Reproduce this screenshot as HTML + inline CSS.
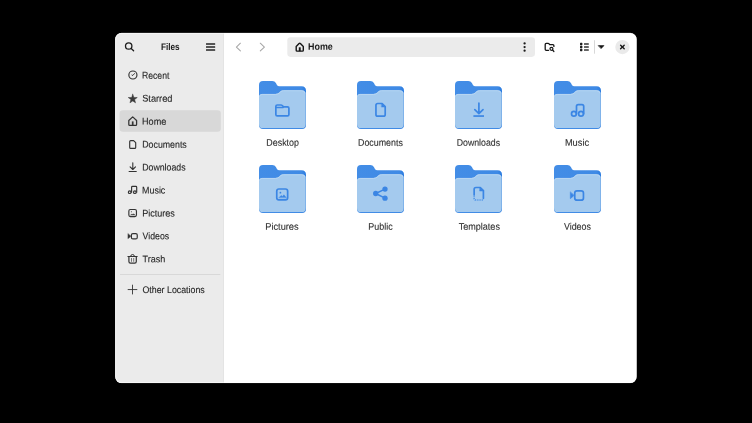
<!DOCTYPE html>
<html><head><meta charset="utf-8">
<style>
html,body{margin:0;padding:0;background:#000;}
body{width:752px;height:423px;position:relative;overflow:hidden;font-family:"Liberation Sans",sans-serif;}
#win{position:absolute;left:115.3px;top:32.9px;width:521.3px;height:350.1px;background:#fff;border-radius:6.3px;overflow:hidden;}
#side{position:absolute;left:0;top:0;width:108.6px;height:100%;background:#ebebeb;border-right:0.7px solid #dcdcdc;box-sizing:border-box;}
#rim{position:absolute;left:115.3px;top:32.9px;width:521.3px;height:350.1px;border-radius:6.3px;box-shadow:inset 0 0 0 0.8px rgba(255,255,255,0.85);}
.t{position:absolute;white-space:nowrap;transform-origin:0 0;font-size:9.6px;line-height:14px;height:14px;-webkit-text-stroke:0.12px currentColor;}
svg{position:absolute;overflow:visible;}
.a{position:absolute;}
</style></head><body>
<svg style="left:0;top:0" width="752" height="423" viewBox="0 0 752 423">
<defs><clipPath id="wc"><rect x="115.3" y="32.9" width="521.3" height="350.1" rx="6.3"/></clipPath></defs>
<g clip-path="url(#wc)">
<rect x="115" y="32" width="523" height="352" fill="#ffffff"/>
<rect x="115" y="32" width="108.2" height="352" fill="#ebebeb"/>
<rect x="223.1" y="32" width="0.85" height="352" fill="#dfdfdf"/>
</g>
<rect x="115.7" y="33.3" width="520.5" height="349.3" rx="5.9" fill="none" stroke="#ffffff" stroke-opacity="0.8" stroke-width="0.8"/>
<rect x="119.6" y="110.3" width="101.2" height="21.5" rx="3.3" fill="#d8d8d8"/>
<rect x="120" y="274.1" width="100.3" height="0.9" fill="#d6d6d6"/>
<rect x="287.3" y="37.2" width="247.7" height="19.7" rx="3.3" fill="#ebebeb"/>
<rect x="594" y="40.2" width="0.9" height="13.5" fill="#d4d4d4"/>
<circle cx="622.4" cy="47.05" r="7.15" fill="#eaeaea"/>
</svg>

<div style="position:absolute;left:0;top:0;width:752px;height:423px;will-change:transform">
<div class="t" style="left:160px;top:39px;color:#1a1a1a;font-weight:bold;-webkit-text-stroke:0;transform:translate(0.99px,0.92px) scaleX(0.8555) rotate(0.08deg)">Files</div>
<div class="t" style="left:308px;top:39px;color:#1a1a1a;font-weight:bold;-webkit-text-stroke:0;transform:translate(0.07px,0.82px) scaleX(0.9290) rotate(0.08deg)">Home</div>
<div class="t" style="left:142px;top:68px;color:#262626;transform:translate(0.04px,0.62px) scaleX(0.8993) rotate(0.08deg)">Recent</div>
<div class="t" style="left:142px;top:91px;color:#262626;transform:translate(0.17px,0.62px) scaleX(0.9640) rotate(0.08deg)">Starred</div>
<div class="t" style="left:142px;top:114px;color:#262626;transform:translate(0.08px,0.62px) scaleX(0.9461) rotate(0.08deg)">Home</div>
<div class="t" style="left:142px;top:137px;color:#262626;transform:translate(0.26px,0.62px) scaleX(0.9170) rotate(0.08deg)">Documents</div>
<div class="t" style="left:142px;top:160px;color:#262626;transform:translate(0.22px,0.52px) scaleX(0.9132) rotate(0.08deg)">Downloads</div>
<div class="t" style="left:142px;top:183px;color:#262626;transform:translate(0.08px,0.52px) scaleX(0.9283) rotate(0.08deg)">Music</div>
<div class="t" style="left:142px;top:206px;color:#262626;transform:translate(0.18px,0.42px) scaleX(0.9443) rotate(0.08deg)">Pictures</div>
<div class="t" style="left:142px;top:229px;color:#262626;transform:translate(0.62px,0.32px) scaleX(0.9104) rotate(0.08deg)">Videos</div>
<div class="t" style="left:142px;top:252px;color:#262626;transform:translate(0.53px,0.22px) scaleX(0.9409) rotate(0.08deg)">Trash</div>
<div class="t" style="left:142px;top:282px;color:#262626;transform:translate(0.52px,0.92px) scaleX(0.9183) rotate(0.08deg)">Other Locations</div>
<div class="t" style="left:266px;top:135px;color:#303030;transform:translate(0.34px,0.82px) scaleX(0.9261) rotate(0.08deg)">Desktop</div>
<div class="t" style="left:358px;top:135px;color:#303030;transform:translate(0.04px,0.82px) scaleX(0.9235) rotate(0.08deg)">Documents</div>
<div class="t" style="left:456px;top:135px;color:#303030;transform:translate(0.76px,0.82px) scaleX(0.9120) rotate(0.08deg)">Downloads</div>
<div class="t" style="left:564px;top:135px;color:#303030;transform:translate(0.89px,0.82px) scaleX(0.9680) rotate(0.08deg)">Music</div>
<div class="t" style="left:265px;top:219px;color:#303030;transform:translate(0.27px,0.72px) scaleX(0.9621) rotate(0.08deg)">Pictures</div>
<div class="t" style="left:368px;top:219px;color:#303030;transform:translate(0.36px,0.72px) scaleX(0.9316) rotate(0.08deg)">Public</div>
<div class="t" style="left:458px;top:219px;color:#303030;transform:translate(0.70px,0.72px) scaleX(0.9431) rotate(0.08deg)">Templates</div>
<div class="t" style="left:563px;top:219px;color:#303030;transform:translate(0.92px,0.72px) scaleX(0.9239) rotate(0.08deg)">Videos</div>
</div>
<svg width="0" height="0" style="left:0;top:0"><defs>
<linearGradient id="gb" x1="0" x2="1" y1="0" y2="0"><stop offset="0" stop-color="#438de6"/><stop offset="0.9" stop-color="#3f8ae5"/><stop offset="1" stop-color="#2a7be0"/></linearGradient>
<g id="fold">
<path d="M0,4 Q0,0 4,0 L13.3,0 Q15.8,0 16.9,2.1 L17.8,3.7 Q18.6,5.2 20.5,5.2 L42.5,5.2 Q47,5.2 47,9.7 L47,44 Q47,48 43,48 L4,48 Q0,48 0,44 Z" fill="url(#gb)"/>
<path d="M0,16 Q0,12.9 3.1,12.9 L16.4,12.9 Q18.5,12.9 19.8,11.8 L21.4,10.3 Q22.7,9.2 24.5,9.2 L42.7,9.2 Q46.7,9.2 46.7,13.2 L46.7,43.2 Q46.7,47.1 42.8,47.1 L4,47.1 Q0,47.1 0,43.2 Z" fill="#a4caee"/>
<path d="M0.5,15.5 Q0.7,13.4 3.1,13.4 L16.5,13.4 Q18.7,13.4 20.1,12.2 L21.7,10.7 Q22.9,9.7 24.5,9.7 L42.7,9.7 Q45.6,9.7 46.2,12.4" fill="none" stroke="#bcd9f4" stroke-width="0.8"/>
</g></defs></svg>
<svg style="left:258.90px;top:81.0px" width="47" height="48"><use href="#fold"/></svg>
<svg style="left:357.05px;top:81.0px" width="47" height="48"><use href="#fold"/></svg>
<svg style="left:455.25px;top:81.0px" width="47" height="48"><use href="#fold"/></svg>
<svg style="left:553.70px;top:81.0px" width="47" height="48"><use href="#fold"/></svg>
<svg style="left:258.90px;top:165.0px" width="47" height="48"><use href="#fold"/></svg>
<svg style="left:357.05px;top:165.0px" width="47" height="48"><use href="#fold"/></svg>
<svg style="left:455.25px;top:165.0px" width="47" height="48"><use href="#fold"/></svg>
<svg style="left:553.70px;top:165.0px" width="47" height="48"><use href="#fold"/></svg>
<svg style="left:0;top:0" width="752" height="423" viewBox="0 0 752 423" fill="none" stroke-linecap="round" stroke-linejoin="round">
<!-- header: search -->
<g stroke="#1c1c1c" stroke-width="1.3">
<circle cx="128.7" cy="46" r="3.2"/><path d="M131.2,48.6 L133.6,50.8"/>
</g>
<!-- hamburger -->
<g fill="#242424" stroke="none">
<rect x="206" y="43.3" width="9.2" height="1.5" rx="0.3"/><rect x="206" y="46.3" width="9.2" height="1.5" rx="0.3"/><rect x="206" y="49.3" width="9.2" height="1.5" rx="0.3"/>
</g>
<!-- nav arrows -->
<g stroke="#a6a6a6" stroke-width="1.05">
<path d="M240.4,43.2 L236.4,47.05 L240.4,50.9"/><path d="M260.3,43.2 L264.4,47.05 L260.3,50.9"/>
</g>
<!-- pathbar home -->
<g stroke="#141414" stroke-width="1.4">
<path d="M296.2,46.5 L299.1,43.5 Q299.75,42.9 300.4,43.5 L303.3,46.5 V50.2 Q303.3,51.1 302.4,51.1 H297.1 Q296.2,51.1 296.2,50.2 Z"/>
<rect x="298.8" y="47.3" width="1.9" height="3.9" fill="#141414" stroke="none"/>
</g>
<!-- pathbar dots -->
<g fill="#1a1a1a" stroke="none"><circle cx="524.6" cy="43.4" r="1.15"/><circle cx="524.6" cy="47.05" r="1.15"/><circle cx="524.6" cy="50.7" r="1.15"/></g>
<!-- folder search -->
<g stroke="#161616" stroke-width="1.3">
<path d="M548.6,50.3 H546.2 Q545.2,50.3 545.2,49.3 V44.4 Q545.2,43.4 546.2,43.4 H548.1 Q548.7,43.4 549.1,43.9 L549.7,44.7 H552.9 Q553.9,44.7 553.9,45.7 V46.4"/>
<circle cx="551.45" cy="48.85" r="1.5" stroke-width="1.2"/><path d="M552.6,50 L553.9,51.5" stroke-width="1.2"/>
</g>
<!-- list view -->
<g fill="#1c1c1c" stroke="none">
<rect x="580" y="42.85" width="2.4" height="2.3" rx="0.6"/><rect x="580" y="45.85" width="2.4" height="2.3" rx="0.6"/><rect x="580" y="48.85" width="2.4" height="2.3" rx="0.6"/>
<rect x="584" y="43.3" width="4.8" height="1.4" rx="0.3" fill="#333"/><rect x="584" y="46.3" width="4.8" height="1.4" rx="0.3" fill="#333"/><rect x="584" y="49.3" width="4.8" height="1.4" rx="0.3" fill="#333"/>
</g>
<!-- dropdown -->
<path d="M598.5,45.6 H604 L601.25,48.4 Z" fill="#161616" stroke="#161616" stroke-width="0.6"/>
<!-- close x -->
<g stroke="#1a1a1a" stroke-width="1.4"><path d="M620.6,45.25 L624.2,48.85 M624.2,45.25 L620.6,48.85"/></g>

<!-- SIDEBAR ICONS -->
<g stroke="#333333" stroke-width="1.15">
<!-- recent -->
<circle cx="132.9" cy="75" r="4.05"/><path d="M132.6,75.4 L134.7,73.5" stroke-width="0.85"/><path d="M132.6,75.4 L131.9,75" stroke-width="0.8"/>
<!-- home -->
<path d="M128.8,120.5 L132.7,116.9 L136.6,120.5 V124.5 Q136.6,125.4 135.7,125.4 H129.7 Q128.8,125.4 128.8,124.5 Z" stroke-width="1.25"/>
<rect x="131.85" y="121.4" width="1.7" height="4" fill="#363636" stroke="none"/>
<!-- documents -->
<path d="M129.7,141.6 Q129.7,140.6 130.7,140.6 H133.6 L135.7,142.7 V147.4 Q135.7,148.4 134.7,148.4 H130.7 Q129.7,148.4 129.7,147.4 Z"/>
<!-- downloads -->
<path d="M132.8,162.8 V169.3 M130.1,166.8 L132.8,169.5 L135.5,166.8" stroke-width="1.1"/><path d="M129.1,171.4 H136.3" stroke-width="1.05"/>
<!-- music -->
<circle cx="129.7" cy="192.2" r="1.35"/><circle cx="134.85" cy="192.2" r="1.35"/>
<path d="M131.6,192.2 V187.3 Q131.6,186.4 132.5,186.4 H135.8 Q136.7,186.4 136.7,187.3 V192.2"/>
<!-- pictures -->
<rect x="128.85" y="209.45" width="7.6" height="7.1" rx="1.5" stroke-width="1.15"/>
<circle cx="131.4" cy="211.8" r="0.55" fill="#363636" stroke="none"/>
<path d="M130.6,215 L132,213.9 L132.9,214.5 L133.9,213.7 L135,215 Z" fill="#363636" stroke-width="0.3"/>
<!-- videos -->
<rect x="131.4" y="233.55" width="5.85" height="5.35" rx="1.5" stroke-width="1.2"/>
<path d="M127.9,233.7 V238.8 L130.5,236.7 V235.8 Z" fill="#363636" stroke-width="0.3"/>
<!-- trash -->
<path d="M127.9,256.5 H137.2" stroke-width="1"/>
<path d="M130.6,256.3 Q130.7,254.5 132.55,254.5 Q134.4,254.5 134.5,256.3" stroke-width="1"/>
<path d="M128.9,256.8 V261.5 Q128.9,263.1 130.5,263.1 H134.7 Q136.3,263.1 136.3,261.5 V256.8" stroke-width="1.2"/>
<path d="M131.5,258.4 V261.4 M133.7,258.4 V261.4" stroke-width="0.8" stroke="#555"/>
<!-- plus -->
<path d="M128.1,289.55 H136.9 M132.5,285.1 V294" stroke-width="0.9"/>
</g>
<!-- star -->
<path d="M132.75,94.25 L133.90,97.42 L137.27,97.53 L134.60,99.60 L135.54,102.84 L132.75,100.95 L129.96,102.84 L130.90,99.60 L128.23,97.53 L131.60,97.42 Z" fill="#3a3a3a" stroke="#3a3a3a" stroke-width="0.5"/>

<!-- FOLDER EMBLEMS -->
<g stroke="#3b86e4" stroke-width="1.7">
<!-- desktop (folder) -->
<path d="M275.85,106.4 Q275.85,105 277.25,105 H281 Q281.7,105 282.2,105.5 L283.6,106.9 H287.5 Q288.9,106.9 288.9,108.3 V114.5 Q288.9,115.9 287.5,115.9 H277.25 Q275.85,115.9 275.85,114.5 Z"/>
<path d="M276.4,107.5 H283.2" stroke-width="1.3"/>
<!-- documents -->
<path d="M375.95,105.3 Q375.95,103.5 377.75,103.5 H382.1 L385.2,106.6 V114.4 Q385.2,116.2 383.4,116.2 H377.75 Q375.95,116.2 375.95,114.4 Z"/>
<path d="M381.7,103.6 L385.1,107 H381.7 Z" fill="#3b86e4" stroke-width="0.5"/>
<!-- downloads -->
<path d="M478.9,103.2 V113 M474.8,109.7 L478.9,113.6 L483,109.7"/><path d="M473.4,116.05 H484" stroke-linecap="butt"/>
<!-- music -->
<circle cx="573.9" cy="113.8" r="2.4" stroke-width="1.7"/><circle cx="581" cy="113.8" r="2.4" stroke-width="1.7"/>
<path d="M576.5,113.8 V106.3 Q576.5,104.6 578.2,104.6 H582 Q583.7,104.6 583.7,106.3 V113.8" stroke-width="1.7"/>
<!-- pictures -->
<rect x="276.75" y="189" width="10.9" height="10.9" rx="2.2"/>
<circle cx="280.4" cy="192.7" r="0.9" fill="#3b86e4" stroke="none"/>
<path d="M279,197.6 L281.2,195.4 L282.4,196.4 L283.9,194.8 L286.2,197.6 Z" fill="#3b86e4" stroke-width="0.4"/>
<!-- public -->
<g fill="#3b86e4" stroke="none"><circle cx="375.7" cy="193.5" r="2.65"/><circle cx="385" cy="189.1" r="2.65"/><circle cx="385" cy="198.2" r="2.65"/></g>
<path d="M385,189.1 L375.7,193.5 L385,198.2" stroke-width="1.5"/>
<!-- templates -->
<path d="M474.15,195 V189.3 Q474.15,187.5 475.95,187.5 H480.3 L483.4,190.6 V198.3"/>
<path d="M479.9,187.6 L483.3,191 H479.9 Z" fill="#3b86e4" stroke-width="0.5"/>
<path d="M474.15,196.2 V198.4 Q474.15,200 475.95,200 H483" stroke-dasharray="1 0.8" stroke-linecap="butt" stroke-width="1.6" stroke="#4f94e7"/>
<!-- videos -->
<rect x="574.75" y="190.8" width="8.7" height="9.4" rx="2.3" stroke-width="1.7"/>
<path d="M570.3,192.2 V198.7 L573.6,196 V194.9 Z" fill="#3b86e4" stroke-width="0.5"/>
</g>
</svg>

</body></html>
